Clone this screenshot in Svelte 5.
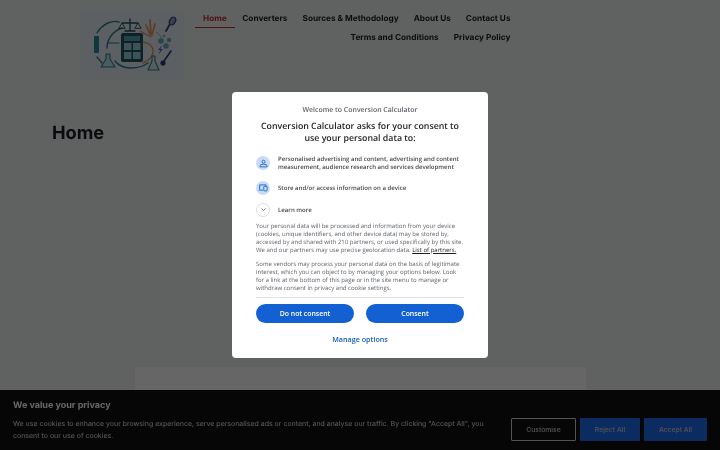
<script>
  const navItems = [
    { label: 'Home', active: true },
    { label: 'Converters' },
    { label: 'Sources & Methodology' },
    { label: 'About Us' },
    { label: 'Contact Us' },
    { label: 'Terms and Conditions' },
    { label: 'Privacy Policy' }
  ];
</script>

<div class="root">
  <div class="page">
    <header class="header">
      <div class="logo">
        <svg width="104" height="70" viewBox="0 0 104 70" fill="none" stroke-linecap="round" stroke-linejoin="round">
          <rect x="0" y="0" width="104" height="70" fill="#e6f1f6" stroke="none" />
          <path d="M17 23 C23 13 33 10 39 12" stroke="#2f7d92" stroke-width="1.4" />
          <path d="M27 38 C27 29 33 21 42 18" stroke="#2f7d92" stroke-width="1.4" />
          <path d="M28 33 L39 33" stroke="#2f7d92" stroke-width="1.2" />
          <path d="M17 47 L22 53" stroke="#2f7d92" stroke-width="1.4" />
          <path d="M35 51 C42 60 58 60 68 53" stroke="#2f7d92" stroke-width="1.4" />
          <rect x="14" y="26" width="5" height="17" fill="#2a8ca8" stroke="none" />
          <path d="M26 44 L26 49 L21 57 L35 57 L30 49 L30 44 Z" fill="#bfe3ea" stroke="#2f7d92" stroke-width="1.1" />
          <path d="M50 9 L50 20 M45 21 L55 21 M42 13 L58 13" stroke="#1d4f5e" stroke-width="1.3" />
          <path d="M39 18 L42 13 L45 18 Z M55 18 L58 13 L61 18 Z" stroke="#1d4f5e" stroke-width="0.9" />
          <rect x="41" y="23" width="22" height="29" rx="2" fill="#1c5564" stroke="none" />
          <rect x="44" y="26" width="16" height="5" fill="#5aa6b5" stroke="none" />
          <rect x="44" y="33" width="7.5" height="7" fill="#9fd0da" stroke="none" />
          <rect x="53" y="33" width="7.5" height="7" fill="#9fd0da" stroke="none" />
          <rect x="44" y="42" width="7.5" height="7" fill="#9fd0da" stroke="none" />
          <rect x="53" y="42" width="7.5" height="7" fill="#9fd0da" stroke="none" />
          <path d="M70 10 L71 25 M66 15 L70 24 M75 14 L72 25" stroke="#e8955a" stroke-width="1.8" />
          <path d="M60 21 L71 27 M63 32 C76 34 77 47 63 53" stroke="#e8955a" stroke-width="1.4" />
          <path d="M76 22 C79 24 81 26 82 29" stroke="#8fb4c0" stroke-width="1" />
          <path d="M72 46 L72 51 L68 60 L79 60 L75 51 L75 46 Z" fill="#d5edf1" stroke="#2f7d92" stroke-width="1.1" />
          <path d="M86 21 L90 14" stroke="#2c3a78" stroke-width="1.7" />
          <ellipse cx="92.5" cy="11" rx="2.8" ry="4.2" transform="rotate(30 92.5 11)" fill="#8fa0c8" stroke="#2c3a78" stroke-width="1.1" />
          <circle cx="81" cy="31" r="2.8" fill="#6fa9b8" stroke="none" />
          <circle cx="84" cy="26" r="1.4" fill="#8fb4c0" stroke="none" />
          <circle cx="89" cy="30" r="2.2" fill="#6fa9b8" stroke="none" />
          <circle cx="86" cy="36" r="2.8" fill="#6fa9b8" stroke="none" />
          <path d="M82 35 L78 40 L80.5 40 L78 45 L83 39 L80.5 39 Z" fill="#5b61c9" stroke="none" />
          <path d="M91 41 L84 51" stroke="#2c3a78" stroke-width="1.6" />
          <circle cx="83" cy="53" r="2.6" fill="#2c3a78" stroke="none" />
        </svg>
      </div>
      <nav class="nav">
        {#each navItems as item}
          <a href="#top" class="nav-link" class:active={item.active}>{item.label}</a>
        {/each}
      </nav>
    </header>

    <h1 class="page-title">Home</h1>
    <div class="card"></div>
  </div>

  <div class="cookie-bar">
    <div class="cookie-text">
      <h2>We value your privacy</h2>
      <p>We use cookies to enhance your browsing experience, serve personalised ads or content, and analyse our traffic. By clicking "Accept All", you consent to our use of cookies.</p>
    </div>
    <div class="cookie-actions">
      <button class="cookie-btn outline">Customise</button>
      <button class="cookie-btn reject">Reject All</button>
      <button class="cookie-btn accept">Accept All</button>
    </div>
  </div>

  <div class="overlay">
    <div class="dialog">
      <div class="welcome">Welcome to Conversion Calculator</div>
      <h2 class="ask">Conversion Calculator asks for your consent to use your personal data to:</h2>

      <div class="purpose first">
        <span class="purpose-icon">
          <svg width="9" height="9" viewBox="0 0 12 12" fill="none" stroke="#1a62c9" stroke-width="1.2">
            <circle cx="6" cy="3.6" r="2" />
            <path d="M1.5 10.5 L1.5 9 C1.5 7.6 3 7 6 7 C9 7 10.5 7.6 10.5 9 L10.5 10.5 Z" />
          </svg>
        </span>
        <span>Personalised advertising and content, advertising and content measurement, audience research and services development</span>
      </div>
      <div class="purpose">
        <span class="purpose-icon">
          <svg width="10" height="9" viewBox="0 0 13 12" fill="none" stroke="#1a62c9" stroke-width="1.2">
            <path d="M2 9 L2 2.5 L10.5 2.5 L10.5 4" />
            <path d="M0.8 9.5 L6.5 9.5" />
            <rect x="7.5" y="4.5" width="4.5" height="6" rx="0.8" />
          </svg>
        </span>
        <span>Store and/or access information on a device</span>
      </div>
      <div class="purpose learn">
        <span class="purpose-icon chevron">
          <svg width="7" height="5" viewBox="0 0 10 6" fill="none" stroke="#5f6368" stroke-width="1.2">
            <path d="M2 1.5 L5 4.5 L8 1.5" />
          </svg>
        </span>
        <span>Learn more</span>
      </div>

      <p class="legal">Your personal data will be processed and information from your device (cookies, unique identifiers, and other device data) may be stored by, accessed by and shared with 210 partners, or used specifically by this site. We and our partners may use precise geolocation data. <a href="#top">List of partners.</a></p>
      <p class="legal">Some vendors may process your personal data on the basis of legitimate interest, which you can object to by managing your options below. Look for a link at the bottom of this page or in the site menu to manage or withdraw consent in privacy and cookie settings.</p>

      <div class="choices">
        <button class="choice">Do not consent</button>
        <button class="choice">Consent</button>
      </div>
      <button class="manage">Manage options</button>
    </div>
  </div>
</div>

<style>
  :global(body) {
    margin: 0;
    background: #f0f4f4;
    overflow: hidden;
    text-rendering: geometricPrecision;
  }

  .root {
    position: relative;
    height: 450px;
    overflow: hidden;
    filter: blur(0.3px);
  }

  .page {
    height: 450px;
    overflow: hidden;
    background: #f0f4f4;
    font-family: "Inter", sans-serif;
  }

  .header {
    display: flex;
    align-items: flex-start;
    padding: 10px 0 0 80px;
  }

  .logo {
    width: 106px;
    height: 70px;
    flex: none;
  }

  .nav {
    width: 332px;
    display: flex;
    flex-wrap: wrap;
    justify-content: flex-end;
  }

  .nav-link {
    padding: 0 7.5px;
    height: 19px;
    line-height: 17px;
    font-size: 8.25px;
    font-weight: 700;
    color: #1a1d24;
    text-decoration: none;
    white-space: nowrap;
    box-sizing: border-box;
  }

  .nav-link.active {
    height: 18px;
    color: #c9302c;
    border-bottom: 1.5px solid #c9302c;
    padding: 0 8px;
  }

  .page-title {
    margin: 41px 0 0 52px;
    font-size: 18.2px;
    line-height: 24px;
    font-weight: 700;
    color: #1a1d24;
  }

  .card {
    margin: 222px 0 0 135px;
    width: 451px;
    height: 100px;
    background: #fff;
  }

  .cookie-bar {
    position: absolute;
    left: 0;
    right: 0;
    bottom: 0;
    height: 60px;
    box-sizing: border-box;
    background: #111;
    padding: 10px 13px 0;
    display: flex;
    justify-content: space-between;
    font-family: "Inter", sans-serif;
  }

  .cookie-text {
    width: 480px;
  }

  .cookie-text h2 {
    margin: 0 0 6px;
    font-size: 9px;
    line-height: 12px;
    font-weight: 700;
    color: #fff;
  }

  .cookie-text p {
    margin: 0;
    font-size: 7px;
    line-height: 12px;
    color: #e0e0e0;
  }

  .cookie-actions {
    display: flex;
    gap: 4px;
    margin-top: 18px;
    height: 23px;
  }

  .cookie-btn {
    font-family: inherit;
    font-size: 6.8px;
    font-weight: 500;
    color: #d0d0d0;
    border: none;
    border-radius: 1px;
    padding: 0;
    background: #1e6cf0;
  }

  .cookie-btn.outline {
    width: 65px;
    background: transparent;
    border: 1px solid #d0d0d0;
  }

  .cookie-btn.reject {
    width: 60px;
  }

  .cookie-btn.accept {
    width: 63px;
  }

  .overlay {
    position: absolute;
    inset: 0;
    background: rgba(0, 0, 0, 0.6);
    display: flex;
    align-items: flex-start;
    justify-content: center;
  }

  .dialog {
    margin-top: 92px;
    width: 256px;
    height: 266px;
    box-sizing: border-box;
    padding: 14px 24px 0;
    background: #fff;
    border-radius: 4px;
    font-family: "Open Sans", sans-serif;
    color: #444746;
  }

  .welcome {
    text-align: center;
    font-size: 6.95px;
    line-height: 10px;
    font-weight: 600;
    color: #5f6368;
  }

  .ask {
    margin: 4px 0 11px;
    text-align: center;
    font-size: 8.8px;
    line-height: 12px;
    font-weight: 600;
    color: #1f1f1f;
  }

  .purpose {
    display: flex;
    align-items: center;
    gap: 8px;
    margin-bottom: 8px;
    font-size: 6.05px;
    line-height: 8px;
    font-weight: 600;
    color: #444746;
  }

  .purpose.first {
    margin-bottom: 9.5px;
  }

  .purpose-icon {
    width: 14px;
    height: 14px;
    flex: none;
    display: flex;
    align-items: center;
    justify-content: center;
    border-radius: 50%;
    background: #c9dcf6;
  }

  .purpose-icon.chevron {
    background: #fff;
    border: 0.5px solid #dadce0;
    box-sizing: border-box;
  }

  .purpose.learn {
    margin-bottom: 5px;
  }

  .legal {
    margin: 0 0 6px;
    font-size: 6.02px;
    line-height: 8px;
    color: #5f6368;
  }

  .legal + .legal {
    margin-bottom: 5px;
  }

  .legal a {
    color: #1f1f1f;
    font-weight: 500;
  }

  .choices {
    display: flex;
    justify-content: space-between;
    border-top: 0.5px solid #e3e3e3;
    padding-top: 6px;
  }

  .choice {
    width: 98px;
    height: 19px;
    padding: 0;
    border: none;
    border-radius: 10px;
    background: #1360d3;
    color: #fff;
    font-family: inherit;
    font-size: 6.9px;
    font-weight: 600;
  }

  .manage {
    display: block;
    margin: 10px auto 0;
    padding: 0;
    border: none;
    background: none;
    color: #1a5fb4;
    font-family: inherit;
    font-size: 7.2px;
    line-height: 12px;
    font-weight: 600;
  }
</style>
